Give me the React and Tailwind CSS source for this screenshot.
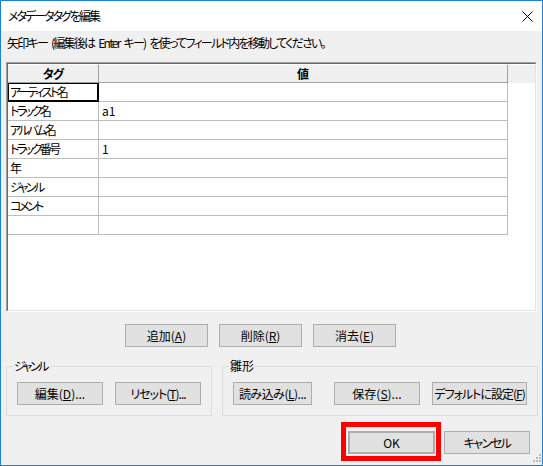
import React from 'react';

const rows = [
  ['アーティスト名', ''],
  ['トラック名', 'a1'],
  ['アルバム名', ''],
  ['トラック番号', '1'],
  ['年', ''],
  ['ジャンル', ''],
  ['コメント', ''],
  ['', ''],
];

function Btn({ className = '', children }) {
  return (
    <button
      type="button"
      className={`h-[23px] shrink-0 whitespace-nowrap bg-[#e1e1e1] border border-[#adadad] text-[12px] leading-none text-black flex items-center justify-center ${className}`}
    >
      {children}
    </button>
  );
}

export default function App() {
  return (
    <div className="relative w-[543px] h-[466px] overflow-hidden border border-[#1883d7] bg-[#f0f0f0] flex flex-col font-['Noto_Sans_CJK_JP',sans-serif] [font-feature-settings:'palt'] text-[12px] text-black">
      {/* Title bar */}
      <div className="h-[30px] shrink-0 bg-white flex items-center justify-between pl-[7px] pr-[9px]">
        <span className="tracking-[-2px]">メタデータタグを編集</span>
        <svg width="11" height="11" viewBox="0 0 11 11">
          <path d="M0.5 0.5L10.5 10.5M10.5 0.5L0.5 10.5" stroke="#000" strokeWidth="1" />
        </svg>
      </div>

      {/* Instruction */}
      <div className="h-[24px] shrink-0 flex items-center pl-[6px] tracking-[-1.75px] [word-spacing:3px] whitespace-pre">
        矢印キー (編集後は Enter キー) を使ってフィールド内を移動してください。
      </div>

      {/* Grid */}
      <div className="mt-[7px] ml-[5px] w-[531px] h-[250px] shrink-0 border border-t-[#a0a0a0] border-l-[#a0a0a0] border-r-white border-b-white">
        <div className="w-full h-full border border-t-[#696969] border-l-[#696969] border-r-[#e3e3e3] border-b-[#e3e3e3] bg-white flex flex-col">
          <div className="h-[19px] shrink-0 flex bg-[#f0f0f0] border-t border-t-white">
            <div className="w-[91px] border-r border-b border-[#a0a0a0] flex items-center justify-center font-bold tracking-[-1px]">タグ</div>
            <div className="w-[409px] border-r border-b border-[#a0a0a0] flex items-center justify-center font-bold">値</div>
            <div className="flex-1" />
          </div>
          {rows.map(([tag, val], i) => (
            <div key={i} className="h-[19px] shrink-0 flex">
              <div
                className={
                  i === 0
                    ? 'w-[91px] border-r border-b border-black shadow-[inset_0_0_0_1px_#000] pl-[2px] flex items-center tracking-[-2.5px] whitespace-nowrap'
                    : 'w-[91px] border-r border-b border-[#bdbdbd] pl-[2px] flex items-center tracking-[-2.5px] whitespace-nowrap'
                }
              >
                {tag}
              </div>
              <div className="w-[409px] border-r border-b border-[#bdbdbd] pl-[3px] flex items-center">{val}</div>
            </div>
          ))}
        </div>
      </div>

      {/* Add / delete / clear */}
      <div className="mt-[12px] ml-[124px] flex gap-[11px] shrink-0">
        <Btn className="w-[83px]">追加(<u>A</u>)</Btn>
        <Btn className="w-[83px]">削除(<u>R</u>)</Btn>
        <Btn className="w-[83px]">消去(<u>E</u>)</Btn>
      </div>

      {/* Group boxes */}
      <div className="mt-[11px] ml-[5px] flex gap-[10px] shrink-0">
        <fieldset className="w-[206px] border border-[#dcdcdc] pl-[10px] pt-[8px] pb-[10px] flex gap-[12px]">
          <legend className="ml-[-4px] px-[1px] leading-[16px] tracking-[-2.5px]">ジャンル</legend>
          <Btn className="w-[86px]">編集(<u>D</u>)...</Btn>
          <Btn className="w-[86px] tracking-[-1px]">リセット(<u>T</u>)...</Btn>
        </fieldset>
        <fieldset className="w-[316px] border border-[#dcdcdc] pl-[10px] pt-[8px] pb-[10px] flex">
          <legend className="ml-[-4px] px-[1px] leading-[16px]">雛形</legend>
          <Btn className="w-[79px] tracking-[-0.5px]">読み込み(<u>L</u>)...</Btn>
          <Btn className="w-[86px] ml-[22px]">保存(<u>S</u>)...</Btn>
          <Btn className="w-[95px] ml-[12px] tracking-[-1px]">デフォルトに設定(<u>F</u>)</Btn>
        </fieldset>
      </div>

      {/* OK / Cancel */}
      <div className="mt-[15px] ml-[347px] flex gap-[9px] shrink-0">
        <div className="relative">
          <Btn className="w-[87px] border-2 border-[#0078d7]">OK</Btn>
          <div className="absolute left-[-7px] top-[-9px] w-[100px] h-[39px] border-[5px] border-[#ff0000] pointer-events-none" />
        </div>
        <Btn className="w-[86px] tracking-[-1.5px]">キャンセル</Btn>
      </div>

      {/* Resize grip */}
      <svg className="absolute right-0 bottom-0" width="11" height="11" viewBox="0 0 11 11">
        <rect x="8" y="0" width="2" height="2" fill="#bcbcbc" />
        <rect x="5" y="3" width="2" height="2" fill="#bcbcbc" />
        <rect x="8" y="3" width="2" height="2" fill="#bcbcbc" />
        <rect x="2" y="6" width="2" height="2" fill="#bcbcbc" />
        <rect x="5" y="6" width="2" height="2" fill="#bcbcbc" />
        <rect x="8" y="6" width="2" height="2" fill="#bcbcbc" />
      </svg>
    </div>
  );
}
